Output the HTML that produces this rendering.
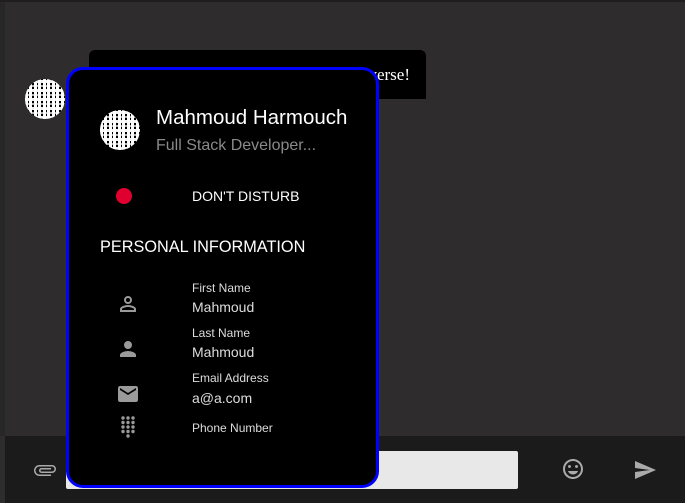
<!DOCTYPE html>
<html><head><meta charset="utf-8"><style>
*{margin:0;padding:0;box-sizing:border-box}
body{width:685px;height:503px;overflow:hidden;background:#2e2c2d;font-family:"Liberation Sans",sans-serif;position:relative}
.top{position:absolute;left:0;top:0;width:685px;height:2px;background:#1e1e1e}
.left{position:absolute;left:0;top:2px;width:5px;height:434px;background:#272727}
.bubble{position:absolute;left:89px;top:50px;width:337px;height:49px;background:#000;border-radius:6px 6px 0 0;color:#fff;font-family:"Liberation Serif",serif;font-size:17px}
.bubble span{position:absolute;right:16px;top:15px}
.av{position:absolute;border-radius:50%;background:
repeating-linear-gradient(90deg,#fff 0 3px,#000 3px 4px,#fff 4px 7px,#000 7px 9px),#fff;overflow:hidden}
.av::after{content:"";position:absolute;inset:0;background:repeating-linear-gradient(0deg,rgba(255,255,255,.95) 0 3px,transparent 3px 5px,rgba(255,255,255,.7) 5px 7px,transparent 7px 9px)}
.bar{position:absolute;left:5px;top:436px;width:680px;height:67px;background:#1b1b1b}
.input{position:absolute;left:66px;top:451px;width:452px;height:38px;background:#e8e8e8;border-radius:2px}
.card{position:absolute;left:66px;top:67px;width:313px;height:421px;background:#000;border:3px solid #0000ff;border-radius:17px}
.t{position:absolute;color:#fff;white-space:nowrap}
.ic{position:absolute}
</style></head><body>
<div class="top"></div><div class="left"></div>
<div class="bubble"><span>verse!</span></div>
<div class="av" style="left:25px;top:79px;width:40px;height:40px"></div>
<div class="bar"></div>
<div class="input"></div>
<svg class="ic" style="left:33px;top:458px" width="24" height="24" viewBox="0 0 24 24"><path fill="#aaa" d="M16.5 6v11.5a4 4 0 0 1-8 0V5a2.5 2.5 0 0 1 5 0v10.5a1 1 0 0 1-2 0V6H10v9.5a2.5 2.5 0 0 0 5 0V5a4 4 0 0 0-8 0v12.5a5.5 5.5 0 0 0 11 0V6h-1.5z" transform="rotate(90 12 12)"/></svg>
<svg class="ic" style="left:561px;top:457px" width="24" height="24" viewBox="0 0 24 24"><path fill="#aaa" d="M11.99 2C6.47 2 2 6.48 2 12s4.47 10 9.99 10C17.52 22 22 17.52 22 12S17.52 2 11.99 2zM12 20c-4.42 0-8-3.58-8-8s3.58-8 8-8 8 3.58 8 8-3.58 8-8 8zm3.5-9c.83 0 1.5-.67 1.5-1.5S16.33 8 15.5 8 14 8.67 14 9.5s.67 1.5 1.5 1.5zm-7 0c.83 0 1.5-.67 1.5-1.5S9.330 8 8.5 8 7 8.67 7 9.5 7.67 11 8.5 11zm3.5 6.5c2.33 0 4.31-1.46 5.11-3.5H6.89c.8 2.04 2.78 3.5 5.11 3.5z"/></svg>
<svg class="ic" style="left:633px;top:458px" width="24" height="24" viewBox="0 0 24 24"><path fill="#aaa" d="M2.01 21L23 12 2.01 3 2 10l15 2-15 2z"/></svg>
<div class="card"></div>
<div class="av" style="left:100px;top:110px;width:40px;height:40px"></div>
<div class="t" style="left:156px;top:106px;font-size:20.5px">Mahmoud Harmouch</div>
<div class="t" style="left:156px;top:137px;font-size:16px;color:#8a8a8a">Full Stack Developer...</div>
<div style="position:absolute;left:116px;top:188px;width:16px;height:16px;border-radius:50%;background:#e0002f"></div>
<div class="t" style="left:192px;top:188px;font-size:14px">DON'T DISTURB</div>
<div class="t" style="left:100px;top:238px;font-size:16.3px">PERSONAL INFORMATION</div>
<svg class="ic" style="left:116px;top:292px" width="24" height="24" viewBox="0 0 24 24"><path fill="#9a9a9a" d="M12 6a2 2 0 1 1 0 4 2 2 0 0 1 0-4m0 9c2.7 0 5.8 1.29 6 2v1H6v-.99c.2-.72 3.3-2.01 6-2.01M12 4a4 4 0 1 0 0 8 4 4 0 0 0 0-8zm0 9c-2.67 0-8 1.340-8 4v3h16v-3c0-2.66-5.33-4-8-4z"/></svg>
<div class="t" style="left:192px;top:281px;font-size:12px;color:#ddd">First Name</div>
<div class="t" style="left:192px;top:299px;font-size:14px;color:#ddd">Mahmoud</div>
<svg class="ic" style="left:116px;top:337px" width="24" height="24" viewBox="0 0 24 24"><path fill="#9a9a9a" d="M12 12a4 4 0 1 0 0-8 4 4 0 0 0 0 8zm0 2c-2.67 0-8 1.34-8 4v2h16v-2c0-2.66-5.33-4-8-4z"/></svg>
<div class="t" style="left:192px;top:326px;font-size:12px;color:#ddd">Last Name</div>
<div class="t" style="left:192px;top:344px;font-size:14px;color:#ddd">Mahmoud</div>
<svg class="ic" style="left:116px;top:382px" width="24" height="24" viewBox="0 0 24 24"><path fill="#9a9a9a" d="M20 4H4c-1.1 0-2 .9-2 2v12c0 1.1.9 2 2 2h16c1.1 0 2-.9 2-2V6c0-1.1-.9-2-2-2zm0 4l-8 5-8-5V6l8 5 8-5v2z"/></svg>
<div class="t" style="left:192px;top:371px;font-size:12px;color:#ddd">Email Address</div>
<div class="t" style="left:192px;top:390px;font-size:14px;color:#ddd">a@a.com</div>
<svg class="ic" style="left:116px;top:415px" width="24" height="24" viewBox="0 0 24 24"><g fill="#9a9a9a"><circle cx="7" cy="3" r="1.7"/><circle cx="12" cy="3" r="1.7"/><circle cx="17" cy="3" r="1.7"/><circle cx="7" cy="7.5" r="1.7"/><circle cx="12" cy="7.5" r="1.7"/><circle cx="17" cy="7.5" r="1.7"/><circle cx="7" cy="12" r="1.7"/><circle cx="12" cy="12" r="1.7"/><circle cx="17" cy="12" r="1.7"/><circle cx="7" cy="16.5" r="1.7"/><circle cx="12" cy="16.5" r="1.7"/><circle cx="17" cy="16.5" r="1.7"/><circle cx="12" cy="21" r="1.7"/></g></svg>
<div class="t" style="left:192px;top:421px;font-size:12px;color:#ddd">Phone Number</div>
</body></html>
